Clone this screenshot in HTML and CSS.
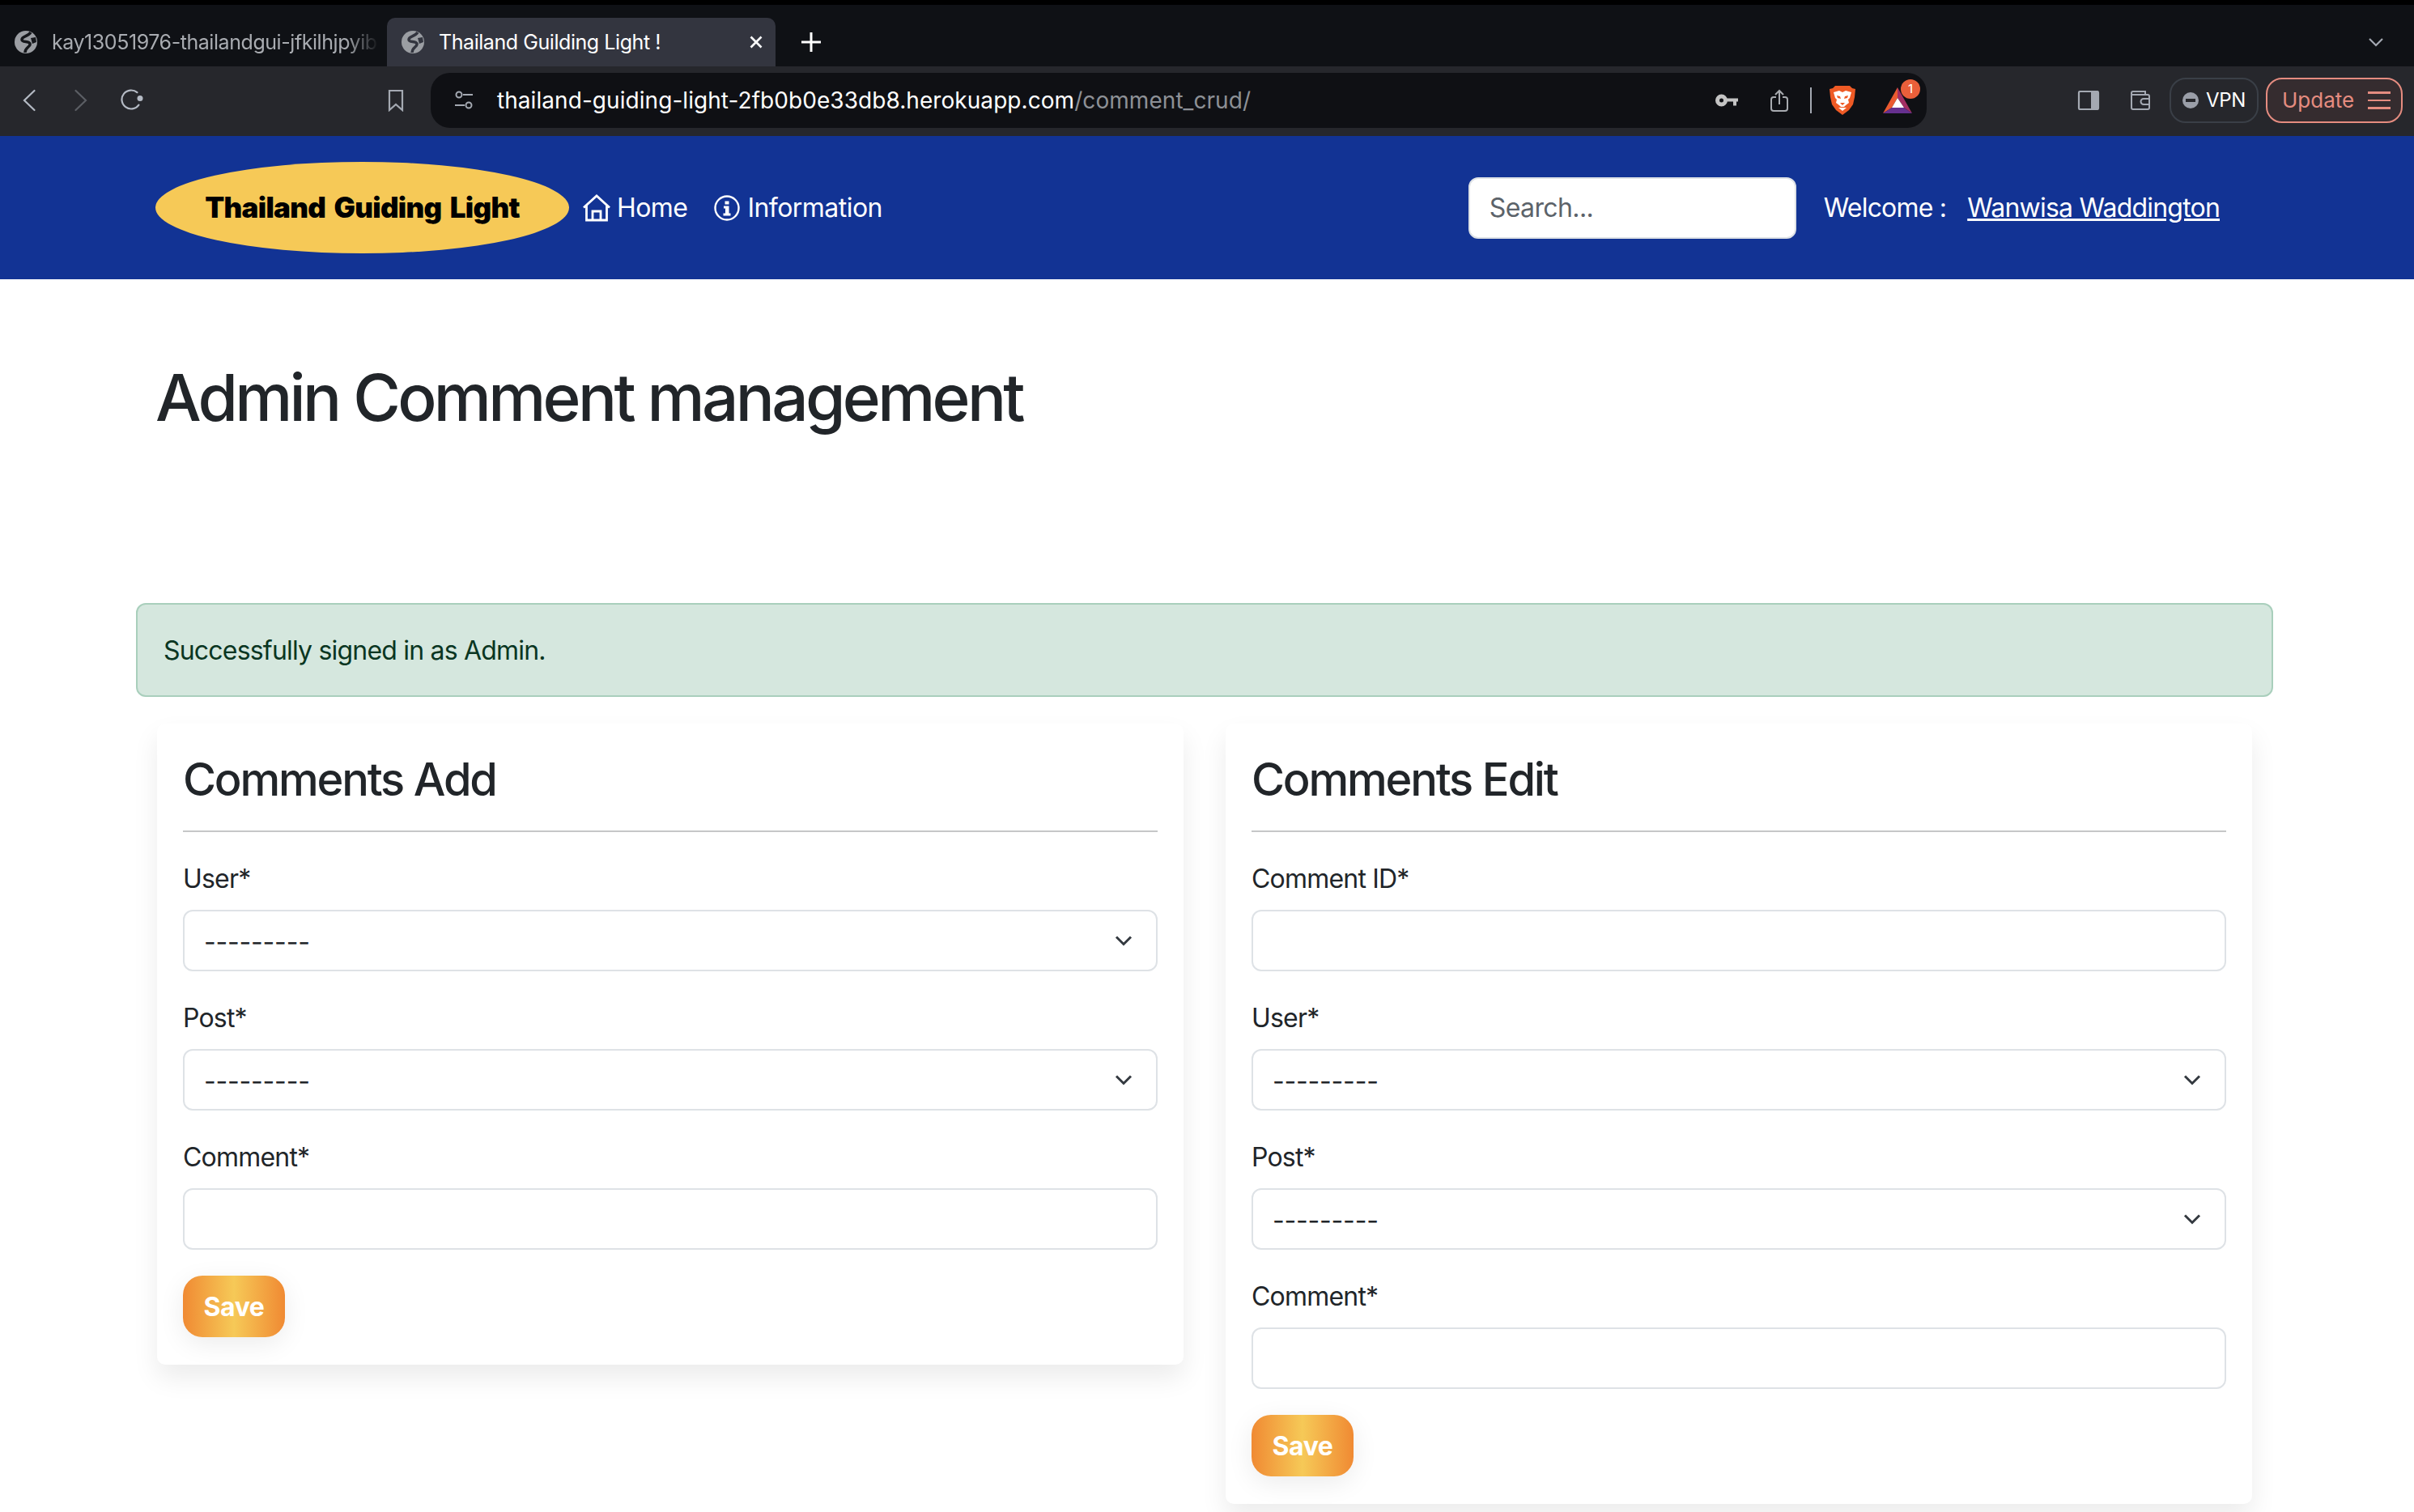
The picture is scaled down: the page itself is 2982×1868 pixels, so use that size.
FILE: index.html
```html
<!DOCTYPE html>
<html lang="en">
<head>
  <meta charset="UTF-8">
  <title>Thailand Guilding Light !</title>
  <link rel="stylesheet" href="styles.css">
</head>
<body>
  <!-- browser tabs -->
  <div class="tabstrip">
    <div class="tab">
      <svg class="globe" viewBox="0 0 28 28"><circle cx="14" cy="14" r="14" fill="#9b9ea3"/><path d="M20 2C16 8 9 6 9 11c0 4 9 1 10 5 1 4-6 4-6 11" stroke="#15171b" stroke-width="3.500" fill="none"/><path d="M20 9l6-1 1 6-5 2z" fill="#15171b"/></svg>
      <span class="tab-title fade">kay13051976-thailandgui-jfkilhjpyib</span>
    </div>
    <div class="tab active">
      <svg class="globe" viewBox="0 0 28 28"><circle cx="14" cy="14" r="14" fill="#9b9ea3"/><path d="M20 2C16 8 9 6 9 11c0 4 9 1 10 5 1 4-6 4-6 11" stroke="#33353f" stroke-width="3.500" fill="none"/><path d="M20 9l6-1 1 6-5 2z" fill="#33353f"/></svg>
      <span class="tab-title">Thailand Guilding Light !</span>
      <svg class="tab-close" viewBox="0 0 16 16"><path d="M1.500 1.500l13 13M14.500 1.500l-13 13" stroke="#fff" stroke-width="2.600" fill="none"/></svg>
    </div>
    <svg class="tab-plus" viewBox="0 0 24 24"><path d="M12 0v24M0 12h24" stroke="#fff" stroke-width="3" fill="none"/></svg>
    <svg class="tab-more" viewBox="0 0 20 12"><path d="M2 2l8 8 8-8" stroke="#a4a9b2" stroke-width="2.200" fill="none"/></svg>
  </div>

  <!-- browser toolbar -->
  <div class="toolbar">
    <div class="nav-btns">
      <svg viewBox="0 0 32 28"><path d="M22.500 2L10 14l12.500 12" stroke="#b4bac4" stroke-width="2.200" stroke-linecap="round" fill="none"/></svg>
      <svg viewBox="0 0 32 28"><path d="M9.500 2L22 14 9.500 26" stroke="#5b5e64" stroke-width="2.200" stroke-linecap="round" fill="none"/></svg>
      <svg viewBox="0 0 32 28"><path d="M21.400 4.200A11.500 11.500 0 1 0 23.400 19.600" stroke="#b4bac4" stroke-width="2.200" stroke-linecap="round" fill="none"/><circle cx="25" cy="11.500" r="3.500" fill="#b4bac4"/></svg>
    </div>
    <svg class="bookmark" viewBox="0 0 20 28"><path d="M2 2h16v24l-8-7-8 7z" stroke="#a4a9b2" stroke-width="2.200" fill="none"/></svg>
    <div class="addressbar">
      <svg class="tune" viewBox="0 0 22 24"><circle cx="5" cy="5" r="3.500" stroke="#a4a9b2" stroke-width="2" fill="none"/><path d="M10 5h12M0 18h12" stroke="#a4a9b2" stroke-width="2"/><circle cx="17" cy="18" r="3.500" stroke="#a4a9b2" stroke-width="2" fill="none"/></svg>
      <span class="url">thailand-guiding-light-2fb0b0e33db8.herokuapp.com<span class="url-path">/comment_crud/</span></span>
      <div class="address-icons">
        <svg class="key" viewBox="0 0 28 16"><circle cx="7.500" cy="8" r="5" stroke="#c4c4c4" stroke-width="5" fill="none"/><path d="M13 5.500h15v4h-2v5h-4v-5h-9z" fill="#c4c4c4"/></svg>
        <svg class="share" viewBox="0 0 22 28"><path d="M7 10H4a3 3 0 0 0-3 3v11a3 3 0 0 0 3 3h14a3 3 0 0 0 3-3V13a3 3 0 0 0-3-3h-3M11 19V2M6 7l5-5 5 5" stroke="#a8abb0" stroke-width="2" fill="none"/></svg>
        <span class="divider"></span>
        <svg class="lion" viewBox="0 0 32 36"><path d="M7 0h18l3 3 4 1-1 10-2 9-5 7-8 6-8-6-5-7-2-9-1-10 4-1z" fill="#ee5a25"/><path d="M5 8l7-2 4 2 4-2 7 2-2 7-2 2 1 4-4 3-2 2h-4l-2-2-4-3 1-4-2-2z" fill="#fff"/><path d="M9 12l4 1 1 3-4-1zM23 12l-4 1-1 3 4-1zM13 21h6l-3 3z" fill="#ee5a25"/><path d="M11 27h10l-5 4z" fill="#fff"/></svg>
        <div class="bat">
          <svg viewBox="0 0 36 32"><path d="M18 0L0 32l11-7 7-12z" fill="#ea5a30"/><path d="M18 0l18 32-10-7-8-12z" fill="#a32f63"/><path d="M0 32l11-7h15l10 7z" fill="#66308f"/><path d="M18 13l8 12H11z" fill="#fff"/></svg>
          <span class="bat-badge">1</span>
        </div>
      </div>
    </div>
    <svg class="panel-icon" viewBox="0 0 32 24"><rect x="4" y="1" width="24" height="22" rx="1.500" stroke="#a4a9b2" stroke-width="2.200" fill="none"/><rect x="19" y="1" width="9" height="22" fill="#a4a9b2"/></svg>
    <svg class="wallet-icon" viewBox="2 0 32 24"><path d="M7 5V3a2 2 0 0 1 2-2h15v4M7 5h20a2 2 0 0 1 2 2v14a2 2 0 0 1-2 2H9a2 2 0 0 1-2-2V5z" stroke="#a4a9b2" stroke-width="2" fill="none"/><path d="M29 10h-7a3 3 0 0 0 0 7h7" stroke="#a4a9b2" stroke-width="2" fill="none"/></svg>
    <div class="vpn"><span class="vpn-dot"></span>VPN</div>
    <div class="update">Update
      <span class="burger"><i></i><i></i><i></i></span>
    </div>
  </div>

  <!-- site navbar -->
  <nav class="navbar">
    <a class="brand">Thailand Guiding Light</a>
    <a class="nav-link">
      <svg viewBox="0 0 34 34"><path d="M1 16.500L17 2l16 14.500M4.500 13.500v18.500h25V13.500M12 32V21h10v11" stroke="#fff" stroke-width="2.800" fill="none"/></svg>
      Home
    </a>
    <a class="nav-link">
      <svg viewBox="0 0 34 34"><circle cx="17" cy="17" r="14.500" stroke="#fff" stroke-width="2.400" fill="none"/><path d="M14.500 8.500h5v4h-5zM13 14.500h6.500v9h2v3h-9v-3h2.500v-6H13z" fill="#fff"/></svg>
      Information
    </a>
    <div class="nav-right">
      <input class="search" type="text" placeholder="Search...">
      <span class="welcome">Welcome :</span>
      <a class="username">Wanwisa Waddington</a>
    </div>
  </nav>

  <main class="content">
    <h1>Admin Comment management</h1>

    <div class="alert">Successfully signed in as Admin.</div>

    <div class="cards">
      <form class="card">
        <h3>Comments Add</h3>
        <hr>
        <div class="field">
          <label>User*</label>
          <div class="select-wrap">
            <select><option>---------</option></select>
            <svg class="chevron" viewBox="0 0 16 16"><path d="M2 5l6 6 6-6" stroke="#343a40" stroke-width="2" fill="none"/></svg>
          </div>
        </div>
        <div class="field">
          <label>Post*</label>
          <div class="select-wrap">
            <select><option>---------</option></select>
            <svg class="chevron" viewBox="0 0 16 16"><path d="M2 5l6 6 6-6" stroke="#343a40" stroke-width="2" fill="none"/></svg>
          </div>
        </div>
        <div class="field">
          <label>Comment*</label>
          <input type="text">
        </div>
        <button type="button" class="save">Save</button>
      </form>

      <form class="card">
        <h3>Comments Edit</h3>
        <hr>
        <div class="field">
          <label>Comment ID*</label>
          <input type="text">
        </div>
        <div class="field">
          <label>User*</label>
          <div class="select-wrap">
            <select><option>---------</option></select>
            <svg class="chevron" viewBox="0 0 16 16"><path d="M2 5l6 6 6-6" stroke="#343a40" stroke-width="2" fill="none"/></svg>
          </div>
        </div>
        <div class="field">
          <label>Post*</label>
          <div class="select-wrap">
            <select><option>---------</option></select>
            <svg class="chevron" viewBox="0 0 16 16"><path d="M2 5l6 6 6-6" stroke="#343a40" stroke-width="2" fill="none"/></svg>
          </div>
        </div>
        <div class="field">
          <label>Comment*</label>
          <input type="text">
        </div>
        <button type="button" class="save">Save</button>
      </form>
    </div>
  </main>
</body>
</html>
```

FILE: styles.css
```css
* {
  box-sizing: border-box;
}

html, body {
  height: 1868px;
  overflow: hidden;
}

body {
  margin: 0;
  font-family: Inter, "Liberation Sans", sans-serif;
  font-size: 32px;
  line-height: 48px;
  letter-spacing: -0.8px;
  color: #212529;
  background-color: #fff;
}

/* browser tabs */
.tabstrip {
  display: flex;
  align-items: flex-end;
  height: 82px;
  padding-top: 22px;
  background-color: #0f1115;
  border-top: 6px solid #000;
}

.tab {
  display: flex;
  align-items: center;
  height: 60px;
  padding-left: 18px;
  width: 472px;
  font-size: 25px;
  line-height: 32px;
  letter-spacing: -0.44px;
  color: #a9acb1;
}

.tab.active {
  width: 480px;
  margin-left: 6px;
  color: #fff;
  background-color: #33353f;
  border-radius: 10px 10px 0 0;
}

.globe {
  width: 28px;
  height: 28px;
  flex: none;
  margin-right: 18px;
}

.tab-title {
  white-space: nowrap;
}

.tab-title.fade {
  width: 404px;
  -webkit-mask-image: linear-gradient(to right, #000 90%, transparent);
  mask-image: linear-gradient(to right, #000 90%, transparent);
}

.tab-close {
  width: 16px;
  height: 16px;
  margin-left: auto;
  margin-right: 16px;
}

.tab-plus {
  width: 24px;
  height: 24px;
  margin-left: 32px;
  margin-bottom: 18px;
}

.tab-more {
  width: 20px;
  height: 12px;
  margin-left: auto;
  margin-right: 37px;
  margin-bottom: 24px;
}

/* browser toolbar */
.toolbar {
  display: flex;
  align-items: center;
  height: 86px;
  padding: 0 14px 2px 20px;
  background-color: #26272c;
}

.nav-btns {
  display: flex;
  gap: 32px;
}

.nav-btns svg {
  width: 32px;
  height: 28px;
}

.bookmark {
  width: 20px;
  height: 28px;
  margin-left: 299px;
}

.addressbar {
  display: flex;
  align-items: center;
  width: 1848px;
  height: 68px;
  margin-left: 33px;
  padding: 0 18px 0 30px;
  background-color: #0f1014;
  border-radius: 24px;
}

.tune {
  width: 22px;
  height: 24px;
  margin-right: 30px;
}

.url {
  font-size: 28px;
  letter-spacing: 0.06px;
  color: #fff;
}

.url-path {
  color: #8d9096;
}

.address-icons {
  display: flex;
  align-items: center;
  margin-left: auto;
}

.key {
  width: 28px;
  height: 16px;
}

.share {
  width: 22px;
  height: 28px;
  margin-left: 40px;
}

.divider {
  width: 2px;
  height: 32px;
  margin-left: 27px;
  background-color: #a4a9b2;
}

.lion {
  width: 32px;
  height: 36px;
  margin-left: 22px;
}

.bat {
  position: relative;
  width: 36px;
  height: 32px;
  margin-left: 34px;
}

.bat svg {
  display: block;
  width: 36px;
  height: 32px;
}

.bat-badge {
  position: absolute;
  top: -10px;
  left: 22px;
  width: 24px;
  height: 24px;
  font-size: 15px;
  line-height: 24px;
  letter-spacing: 0;
  text-align: center;
  color: #fff;
  background-color: #e95f3a;
  border-radius: 12px;
}

.panel-icon {
  width: 32px;
  height: 24px;
  margin-left: 184px;
}

.wallet-icon {
  width: 32px;
  height: 24px;
  margin-left: 32px;
}

.vpn {
  display: flex;
  align-items: center;
  width: 110px;
  height: 56px;
  margin-left: 20px;
  padding-left: 14px;
  font-size: 24px;
  letter-spacing: -0.3px;
  color: #fff;
  border: 2px solid #3a3f47;
  border-radius: 20px;
}

.vpn-dot {
  position: relative;
  width: 20px;
  height: 20px;
  margin-right: 9px;
  background-color: #9a9ea8;
  border-radius: 50%;
}

.vpn-dot::after {
  content: "";
  position: absolute;
  top: 8px;
  left: 4px;
  width: 12px;
  height: 4px;
  background-color: #26272c;
}

.update {
  display: flex;
  align-items: center;
  width: 169px;
  height: 56px;
  margin-left: 9px;
  padding-left: 18px;
  font-size: 26px;
  letter-spacing: 0;
  color: #e58c80;
  background-color: #352c2f;
  border: 2px solid #e58c80;
  border-radius: 20px;
}

.burger {
  display: flex;
  flex-direction: column;
  gap: 7px;
  width: 28px;
  margin-left: auto;
  margin-right: 13px;
}

.burger i {
  display: block;
  height: 2.500px;
  background-color: #e58c80;
}

/* site navbar */
.navbar {
  display: flex;
  align-items: center;
  height: 177px;
  padding: 0 240px 0 192px;
  background-color: #123394;
}

.brand {
  width: 511px;
  height: 113px;
  margin-right: 17px;
  font-size: 35px;
  font-weight: 900;
  line-height: 113px;
  letter-spacing: -0.7px;
  word-spacing: 4px;
  text-align: center;
  color: #000;
  background-color: #f6c957;
  border-radius: 50%;
}

.nav-link {
  display: flex;
  align-items: center;
  margin-right: 32px;
  letter-spacing: -0.55px;
  color: #fff;
  white-space: nowrap;
}

.nav-link svg {
  width: 34px;
  height: 34px;
  margin-right: 8px;
}

.nav-right {
  display: flex;
  align-items: center;
  margin-left: auto;
  color: #fff;
}

.search {
  width: 405px;
  height: 76px;
  margin-right: 34px;
  padding: 12px 24px;
  font: inherit;
  letter-spacing: -0.6px;
  background-color: #fff;
  border: 2px solid #dee2e6;
  border-radius: 12px;
}

.search::placeholder {
  color: #5c636a;
}

.welcome {
  margin-right: 26px;
}

.username {
  color: #fff;
  text-decoration: underline;
}

/* page content */
.content {
  width: 2640px;
  margin-left: 168px;
  padding-top: 98px;
}

h1 {
  margin: 0 0 206px 24px;
  font-size: 80px;
  font-weight: 500;
  line-height: 96px;
  letter-spacing: -3.67px;
}

.alert {
  height: 116px;
  padding: 33px 32px 31px;
  color: #0a3622;
  background-color: #d5e7de;
  border: 2px solid #a9cfbc;
  border-radius: 12px;
}

.cards {
  display: flex;
  align-items: flex-start;
  gap: 52px;
  margin-top: 33px;
  padding-left: 26px;
}

.card {
  width: 1268px;
  padding: 32px 32px 34px;
  background-color: #fff;
  border-radius: 10px;
  box-shadow: 0 16px 32px rgba(0,0,0,0.08);
}

h3 {
  margin: 0 0 29px;
  padding-top: 4px;
  font-size: 56px;
  font-weight: 500;
  line-height: 67px;
  letter-spacing: -2.2px;
}

hr {
  height: 2px;
  margin: 0 0 32px;
  background-color: #c6c7c8;
  border: 0;
}

.field {
  margin-bottom: 32px;
}

label {
  display: block;
  margin-bottom: 14px;
  padding-top: 2px;
}

input, select {
  display: block;
  width: 100%;
  height: 76px;
  padding: 12px 24px;
  font: inherit;
  color: #212529;
  background-color: #fff;
  border: 2px solid #dee2e6;
  border-radius: 12px;
  appearance: none;
  -webkit-appearance: none;
}

select {
  padding: 14px 24px 10px;
  letter-spacing: -0.2px;
}

.select-wrap {
  position: relative;
}

.chevron {
  position: absolute;
  top: 26px;
  right: 26px;
  width: 32px;
  height: 24px;
}

.save {
  display: block;
  width: 126px;
  height: 76px;
  padding: 2px 0 0;
  font: inherit;
  font-weight: 700;
  letter-spacing: -0.4px;
  color: #fff;
  background: linear-gradient(90deg, #f08a33, #f6c957 50%, #f08a33);
  border: 0;
  border-radius: 24px;
  box-shadow: 0 8px 32px rgba(0,0,0,0.08);
}
```
